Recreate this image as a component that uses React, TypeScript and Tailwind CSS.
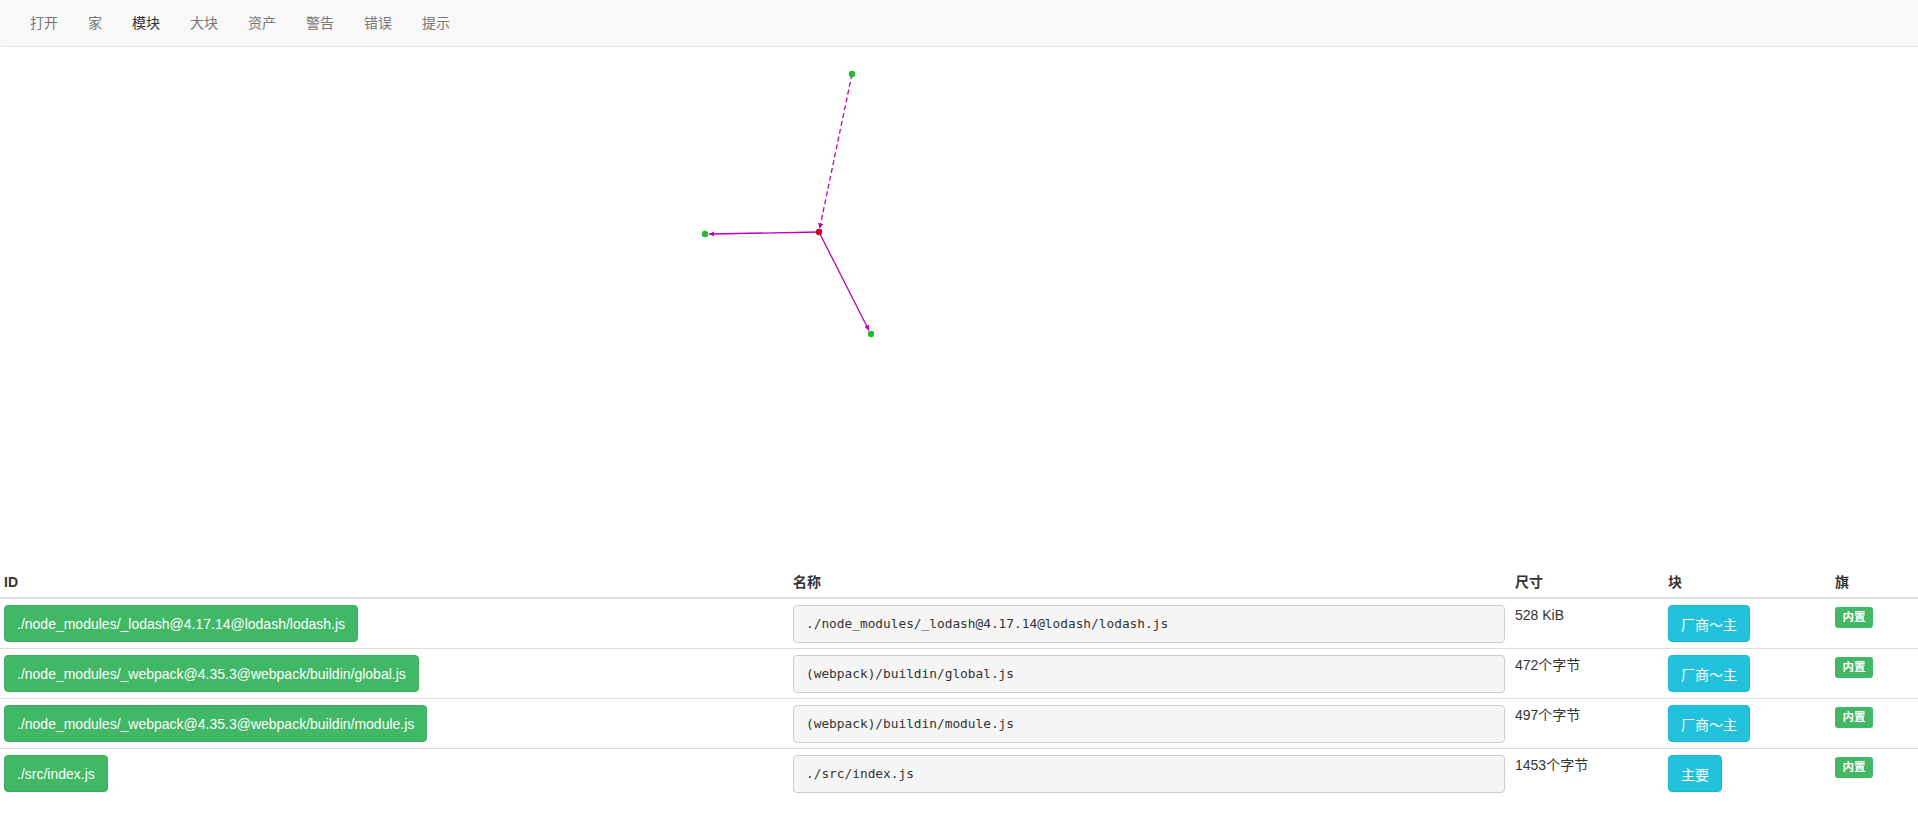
const navItems = ["打开", "家", "模块", "大块", "资产", "警告", "错误", "提示"];

const rows = [
  {
    id: "./node_modules/_lodash@4.17.14@lodash/lodash.js",
    name: "./node_modules/_lodash@4.17.14@lodash/lodash.js",
    size: "528 KiB",
    chunk: "厂商～主",
  },
  {
    id: "./node_modules/_webpack@4.35.3@webpack/buildin/global.js",
    name: "(webpack)/buildin/global.js",
    size: "472个字节",
    chunk: "厂商～主",
  },
  {
    id: "./node_modules/_webpack@4.35.3@webpack/buildin/module.js",
    name: "(webpack)/buildin/module.js",
    size: "497个字节",
    chunk: "厂商～主",
  },
  {
    id: "./src/index.js",
    name: "./src/index.js",
    size: "1453个字节",
    chunk: "主要",
  },
];

const sans = "font-['Liberation_Sans','Noto_Sans_CJK_SC',sans-serif]";

function Graph() {
  return (
    <svg className="block w-full h-[520px]" viewBox="0 1 1918 520">
      <defs>
        <marker
          id="arrow"
          viewBox="0 0 10 10"
          refX="10"
          refY="5"
          markerWidth="4"
          markerHeight="4"
          orient="auto"
        >
          <path d="M0 0 L10 5 L0 10 z" fill="#bb00bb" />
        </marker>
      </defs>
      {/* edges */}
      <line
        x1="852"
        y1="28"
        x2="819.6"
        y2="182.5"
        stroke="#bb00bb"
        strokeWidth="1.3"
        strokeDasharray="5 3"
        markerEnd="url(#arrow)"
      />
      <line
        x1="819"
        y1="186"
        x2="709"
        y2="188"
        stroke="#bb00bb"
        strokeWidth="1.3"
        markerEnd="url(#arrow)"
      />
      <line
        x1="819"
        y1="186"
        x2="869"
        y2="284.5"
        stroke="#bb00bb"
        strokeWidth="1.3"
        markerEnd="url(#arrow)"
      />
      {/* nodes */}
      <circle cx="852" cy="28" r="3.2" fill="#22bb33" />
      <circle cx="705" cy="188" r="3.2" fill="#22bb33" />
      <circle cx="871" cy="288" r="3.2" fill="#22bb33" />
      <circle cx="819" cy="186" r="3.2" fill="#cc0022" />
    </svg>
  );
}

export default function App() {
  return (
    <div className={`${sans} w-[1918px] h-[838px] bg-white text-[14px] text-[#333] overflow-hidden`}>
      {/* Navbar */}
      <nav className="h-[47px] bg-[#f8f8f8] border-b border-[#e7e7e7] rounded-bl-[4px] flex items-center pl-[15px]">
        {navItems.map((item) => (
          <a
            key={item}
            className={`px-[15px] leading-[20px] ${item === "模块" ? "text-[#333]" : "text-[#777]"}`}
          >
            {item}
          </a>
        ))}
      </nav>

      <Graph />

      {/* Modules table */}
      <table className="w-full border-collapse table-fixed">
        <colgroup>
          <col className="w-[789px]" />
          <col className="w-[722px]" />
          <col className="w-[152px]" />
          <col className="w-[167px]" />
          <col />
        </colgroup>
        <thead>
          <tr className="border-b-2 border-[#ddd]">
            <th className="text-left font-bold px-[4px] py-[5px] leading-[20px]">ID</th>
            <th className="text-left font-bold px-[4px] py-[5px] leading-[20px]">名称</th>
            <th className="text-left font-bold px-[4px] py-[5px] leading-[20px]">尺寸</th>
            <th className="text-left font-bold px-[5px] py-[5px] leading-[20px]">块</th>
            <th className="text-left font-bold px-[5px] py-[5px] leading-[20px]">旗</th>
          </tr>
        </thead>
        <tbody>
          {rows.map((r, i) => (
            <tr key={r.id} className={i < rows.length - 1 ? "border-b border-[#ddd]" : ""}>
              <td className="align-top px-[4px] pt-[6px] pb-[5px]">
                <button className="h-[37px] px-[12px] rounded-[4px] border border-[#3aae5d] bg-[#40b865] text-white text-[14px] leading-[20px] whitespace-nowrap">
                  {r.id}
                </button>
              </td>
              <td className="align-top px-[4px] pt-[6px] pb-[5px]">
                <pre className="w-[712px] h-[38px] m-0 px-[12px] flex items-center bg-[#f5f5f5] border border-[#ccc] rounded-[4px] font-['DejaVu_Sans_Mono',monospace] text-[12.8px] text-[#333]">
                  {r.name}
                </pre>
              </td>
              <td className="align-top px-[4px] pt-[6px] pb-[5px] leading-[20px]">{r.size}</td>
              <td className="align-top px-[5px] pt-[6px] pb-[5px]">
                <button className="h-[37px] px-[12px] pt-[2px] rounded-[4px] border border-[#1fb6d0] bg-[#23c2dc] text-white text-[14px] leading-[20px] whitespace-nowrap">
                  {r.chunk}
                </button>
              </td>
              <td className="align-top px-[5px] pt-[7px] pb-[5px]">
                <span className="inline-flex items-center justify-center w-[38px] h-[21px] rounded-[3px] bg-[#40b865] text-white text-[11.5px] font-bold">
                  内置
                </span>
              </td>
            </tr>
          ))}
        </tbody>
      </table>
    </div>
  );
}
